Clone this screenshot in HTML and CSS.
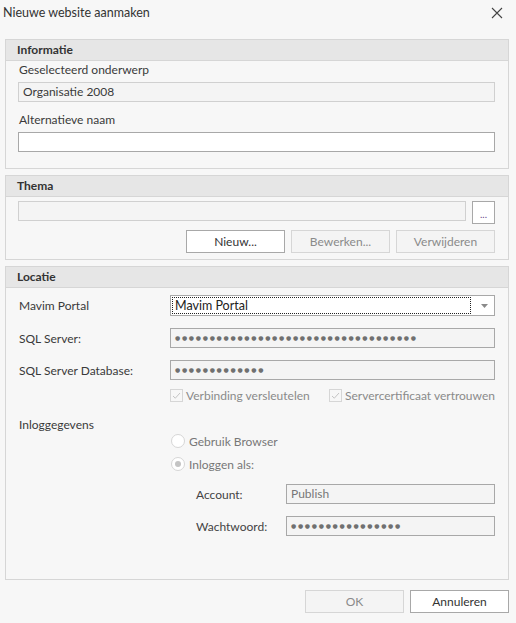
FILE: index.html
```html
<!DOCTYPE html>
<html lang="nl">
<head>
    <meta charset="UTF-8">
    <title>Nieuwe website aanmaken</title>
    <link rel="stylesheet" href="styles.css">
</head>
<body>
    <div class="dialog">
        <div class="titlebar">
            <span class="title">Nieuwe website aanmaken</span>
            <svg class="close" width="12" height="12" viewBox="0 0 12 12">
                <path d="M1 1 L11 11 M11 1 L1 11" stroke="#444" stroke-width="1.1" fill="none"/>
            </svg>
        </div>

        <div class="content">
            <!-- Informatie -->
            <section class="group">
                <div class="group-head">Informatie</div>
                <div class="group-body info-body">
                    <div class="label">Geselecteerd onderwerp</div>
                    <div class="textbox readonly">Organisatie 2008</div>
                    <div class="label spaced">Alternatieve naam</div>
                    <div class="textbox"></div>
                </div>
            </section>

            <!-- Thema -->
            <section class="group">
                <div class="group-head">Thema</div>
                <div class="group-body theme-body">
                    <div class="theme-row">
                        <div class="textbox readonly grow"></div>
                        <div class="btn dots">...</div>
                    </div>
                    <div class="btn-row">
                        <div class="btn">Nieuw...</div>
                        <div class="btn disabled">Bewerken...</div>
                        <div class="btn disabled">Verwijderen</div>
                    </div>
                </div>
            </section>

            <!-- Locatie -->
            <section class="group">
                <div class="group-head">Locatie</div>
                <div class="group-body loc-body">
                    <div class="field-row">
                        <div class="field-label">Mavim Portal</div>
                        <div class="combo">
                            <span class="focus">Mavim Portal</span>
                            <svg class="arrow" width="7" height="4" viewBox="0 0 7 4">
                                <path d="M0 0 H7 L3.5 4 Z" fill="#8a8a8a"/>
                            </svg>
                        </div>
                    </div>
                    <div class="field-row">
                        <div class="field-label">SQL Server:</div>
                        <div class="textbox readonly grow"><span class="pwd">●●●●●●●●●●●●●●●●●●●●●●●●●●●●●●●●●●●</span></div>
                    </div>
                    <div class="field-row">
                        <div class="field-label">SQL Server Database:</div>
                        <div class="textbox readonly grow"><span class="pwd">●●●●●●●●●●●●●</span></div>
                    </div>
                    <div class="check-row">
                        <label class="check first">
                            <svg width="13" height="13" viewBox="0 0 13 13">
                                <rect x="0.5" y="0.5" width="12" height="12" fill="#f7f7f7" stroke="#d6d6d6"/>
                                <path d="M3 7 L5.3 9.2 L10 4" stroke="#c4c4c4" stroke-width="1" fill="none"/>
                            </svg>
                            <span>Verbinding versleutelen</span>
                        </label>
                        <label class="check">
                            <svg width="13" height="13" viewBox="0 0 13 13">
                                <rect x="0.5" y="0.5" width="12" height="12" fill="#f7f7f7" stroke="#d6d6d6"/>
                                <path d="M3 7 L5.3 9.2 L10 4" stroke="#c4c4c4" stroke-width="1" fill="none"/>
                            </svg>
                            <span>Servercertificaat vertrouwen</span>
                        </label>
                    </div>

                    <div class="label login-label">Inloggegevens</div>
                    <div class="radio-row">
                        <span class="radio"></span>
                        <span>Gebruik Browser</span>
                    </div>
                    <div class="radio-row second">
                        <span class="radio on"></span>
                        <span>Inloggen als:</span>
                    </div>
                    <div class="field-row sub">
                        <div class="sub-label">Account:</div>
                        <div class="textbox readonly grow muted">Publish</div>
                    </div>
                    <div class="field-row sub">
                        <div class="sub-label">Wachtwoord:</div>
                        <div class="textbox readonly grow"><span class="pwd">●●●●●●●●●●●●●●●●</span></div>
                    </div>
                </div>
            </section>
        </div>

        <div class="footer">
            <div class="btn disabled">OK</div>
            <div class="btn">Annuleren</div>
        </div>
    </div>
</body>
</html>
```

FILE: styles.css
```css
body {
    margin: 0;
    padding: 0;
    background-color: #f7f7f7;
    font-family: Lato, "Open Sans", sans-serif;
    font-size: 12px;
    color: #3a3a3a;
}

.dialog {
    width: 516px;
    height: 623px;
}

.titlebar {
    height: 25px;
    display: flex;
    align-items: center;
    justify-content: space-between;
    padding: 0 13px 0 3px;
}

.title {
    color: #333;
    font-size: 12.5px;
}

.content {
    padding: 14px 7px 0 5px;
}

.group {
    border: 1px solid #d6d6d6;
    margin-bottom: 6px;
}

.group-head {
    height: 20px;
    line-height: 20px;
    background-color: #e6e6e6;
    border-bottom: 1px solid #d6d6d6;
    padding-left: 11px;
    font-weight: bold;
    color: #333;
}

.group-body {
    padding: 0 13px 0 12px;
}

.label {
    height: 16px;
    line-height: 16px;
    padding-left: 1px;
}

.label.spaced {
    margin-top: 10px;
}

.textbox {
    box-sizing: border-box;
    height: 20px;
    line-height: 18px;
    border: 1px solid #a8a8a8;
    background-color: #fff;
    padding: 0 4px;
    white-space: nowrap;
    overflow: hidden;
}

.textbox.readonly {
    background-color: #f4f4f4;
    border-color: #d0d0d0;
}

.textbox.grow {
    flex: 1;
}

.field-row .textbox.readonly {
    border-color: #a8a8a8;
}

.textbox.muted {
    color: #777;
}

.info-body {
    padding-top: 1px;
    padding-bottom: 16px;
}

.info-body .label + .textbox {
    margin-top: 4px;
}

/* thema */
.theme-body {
    padding-top: 4px;
    padding-bottom: 6px;
}

.theme-row {
    display: flex;
    align-items: flex-start;
    gap: 6px;
}

.btn {
    box-sizing: border-box;
    width: 99px;
    height: 23px;
    line-height: 21px;
    text-align: center;
    border: 1px solid #a8a8a8;
    background-color: #fff;
    color: #333;
}

.btn.disabled {
    border-color: #d6d6d6;
    background-color: #f4f4f4;
    color: #8a8a8a;
}

.btn.dots {
    width: 23px;
    line-height: 24px;
    font-size: 10px;
    color: #6a4a8a;
}

.btn-row {
    display: flex;
    justify-content: flex-end;
    gap: 6px;
    margin-top: 6px;
}

/* locatie */
.loc-body {
    padding-top: 7px;
    padding-bottom: 43px;
}

.field-row {
    display: flex;
    align-items: center;
    margin-top: 12px;
}

.field-row:first-child {
    margin-top: 0;
}

.field-label {
    width: 152px;
    padding-left: 1px;
    box-sizing: border-box;
}

.combo {
    flex: 1;
    box-sizing: border-box;
    height: 21px;
    border: 1px solid #a8a8a8;
    background-color: #fff;
    display: flex;
    align-items: center;
    padding: 1px 6px 1px 1px;
}

.combo .focus {
    flex: 1;
    height: 17px;
    line-height: 16px;
    box-sizing: border-box;
    border: 1px dotted #222;
    padding-left: 2px;
    font-size: 12.5px;
    color: #222;
    margin-right: 10px;
}

.pwd {
    font-family: "DejaVu Sans", sans-serif;
    font-size: 6px;
    letter-spacing: 1.7px;
    color: #707070;
    vertical-align: top;
    line-height: 18px;
}

.check-row {
    display: flex;
    height: 16px;
    margin-top: 7px;
    padding-left: 152px;
    color: #8a8a8a;
}

.check {
    display: flex;
    align-items: center;
    gap: 3px;
}

.check.first {
    width: 159px;
}

.login-label {
    margin-top: 14px;
}

.radio-row {
    display: flex;
    align-items: center;
    height: 16px;
    padding-left: 153px;
    gap: 4px;
    color: #777;
}

.radio-row.second {
    margin-top: 7px;
}

.radio {
    box-sizing: border-box;
    width: 14px;
    height: 14px;
    border-radius: 50%;
    border: 1px solid #d6d6d6;
    background-color: #fff;
    display: flex;
    align-items: center;
    justify-content: center;
}

.radio.on::after {
    content: "";
    width: 6px;
    height: 6px;
    border-radius: 50%;
    background-color: #c4c4c4;
}

.field-row.sub {
    padding-left: 178px;
}

.sub-label {
    width: 90px;
    color: #444;
}

.footer {
    display: flex;
    justify-content: flex-end;
    gap: 6px;
    padding: 4px 7px 0 0;
}
```
